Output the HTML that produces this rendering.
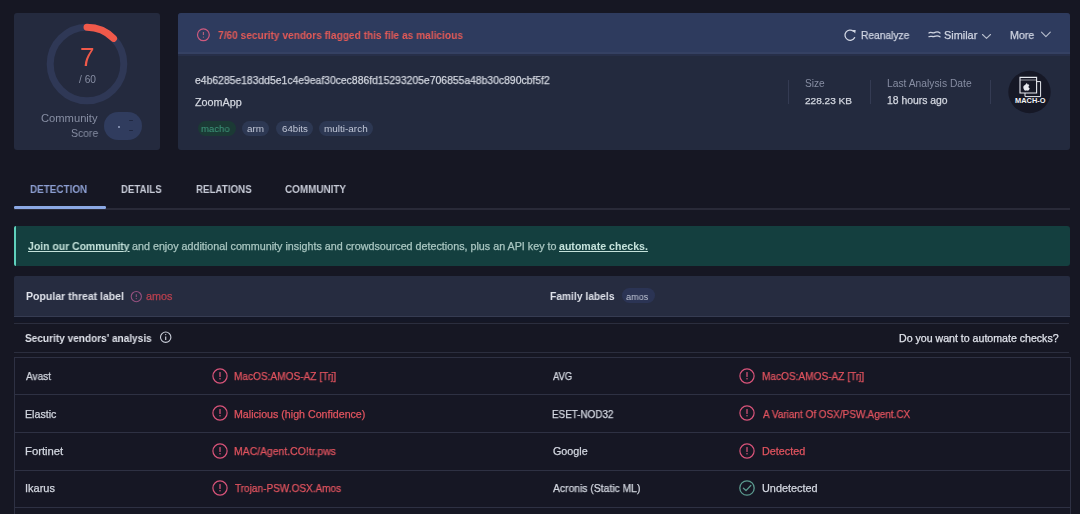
<!DOCTYPE html>
<html><head><meta charset="utf-8">
<style>
*{margin:0;padding:0;box-sizing:border-box}
html,body{width:1080px;height:514px;overflow:hidden;background:#161723;font-family:"Liberation Sans",sans-serif;color:#d3d7e0}
.a{position:absolute}
.t{position:absolute;white-space:nowrap;line-height:1;will-change:transform}
</style></head><body>
<div class="a" style="left:14px;top:13px;width:146px;height:137px;background:#242a3e;border-radius:3px"></div>
<svg class="a" style="left:0;top:0" width="180" height="160">
  <circle cx="87" cy="64" r="36.8" fill="none" stroke="#2f3856" stroke-width="7"/>
  <path d="M87 27.2 A36.8 36.8 0 0 1 113.5 38.4" fill="none" stroke="#f0594a" stroke-width="7" stroke-linecap="round"/>
</svg>
<div class="a" style="left:104px;top:112px;width:38px;height:28px;background:#303c5e;border-radius:14px"></div>
<div class="a" style="left:118.3px;top:126.4px;width:1.4px;height:1.4px;background:#8c98b8;border-radius:50%"></div>
<div class="a" style="left:128.8px;top:120px;width:4.5px;height:1.2px;background:#1f2740;border-radius:1px"></div>
<div class="a" style="left:128.8px;top:129.5px;width:4.5px;height:1.2px;background:#1f2740;border-radius:1px"></div>
<div class="a" style="left:178px;top:13px;width:892px;height:137px;background:#232a3e;border-radius:3px;overflow:hidden"></div>
<div class="a" style="left:178px;top:13px;width:892px;height:40px;background:#2e3b5e;border-radius:3px 3px 0 0"></div>
<div class="a" style="left:178px;top:52px;width:892px;height:2px;background:#354163;"></div>
<div class="a" style="left:178px;top:54px;width:892px;height:2px;background:#272f49;"></div>
<svg class="a" style="left:190px;top:22px" width="26" height="26">
  <circle cx="13.4" cy="12.8" r="5.9" fill="none" stroke="#cf5a7f" stroke-width="1.2"/>
  <path d="M13.4 9.9 V13.1" stroke="#b9607f" stroke-width="1.1"/>
  <circle cx="13.4" cy="15.1" r="0.6" fill="#b9607f"/>
</svg>
<div class="a" style="left:198px;top:120.5px;width:38px;height:15.800000000000011px;background:#1b3a35;border-radius:7.900000000000006px"></div>
<div class="a" style="left:241.5px;top:120.5px;width:27.80000000000001px;height:15.800000000000011px;background:#2d3853;border-radius:7.900000000000006px"></div>
<div class="a" style="left:275.7px;top:120.5px;width:37.10000000000002px;height:15.800000000000011px;background:#2d3853;border-radius:7.900000000000006px"></div>
<div class="a" style="left:319.3px;top:120.5px;width:53.69999999999999px;height:15.800000000000011px;background:#2d3853;border-radius:7.900000000000006px"></div>
<svg class="a" style="left:840px;top:25px" width="20" height="20">
  <path d="M13.4 6.3 A5.1 5.1 0 1 0 14.6 12.6" fill="none" stroke="#d0d5e2" stroke-width="1.25" stroke-linecap="round"/>
  <path d="M12.2 4.9 L15.7 5 L15.2 8.4 Z" fill="#d0d5e2"/>
</svg>
<svg class="a" style="left:925px;top:25px" width="20" height="20">
  <path d="M3.9 7.9 C5.8 6.6 7.6 8.4 9.4 7.6 C11.2 6.8 13.2 6.6 15 8" fill="none" stroke="#d0d5e2" stroke-width="1.25" stroke-linecap="round"/>
  <path d="M3.9 11.7 C5.8 10.4 7.6 12.2 9.4 11.4 C11.2 10.6 13.2 10.4 15 11.8" fill="none" stroke="#d0d5e2" stroke-width="1.25" stroke-linecap="round"/>
</svg>
<svg class="a" style="left:978px;top:28px" width="18" height="14">
  <path d="M4.5 6.5 L8.5 10.3 L12.5 6.5" fill="none" stroke="#b7bdcc" stroke-width="1.1" stroke-linecap="round" stroke-linejoin="round"/>
</svg>
<svg class="a" style="left:1037px;top:27px" width="18" height="14">
  <path d="M4.5 5.2 L8.9 9.6 L13.3 5.2" fill="none" stroke="#b7bdcc" stroke-width="1.1" stroke-linecap="round" stroke-linejoin="round"/>
</svg>
<div class="a" style="left:787.5px;top:80px;width:1px;height:24px;background:#343b53;"></div>
<div class="a" style="left:869.5px;top:80px;width:1px;height:24px;background:#343b53;"></div>
<div class="a" style="left:989.5px;top:80px;width:1px;height:24px;background:#343b53;"></div>
<svg class="a" style="left:1004px;top:66px" width="52" height="52">
  <circle cx="25.5" cy="26" r="21.2" fill="#161826"/>
  <path d="M21 15.6 H36.6 V30.6 H21 Z" fill="none" stroke="#e8eaf0" stroke-width="1"/>
  <path d="M16 11.4 H32.6 V27 H16 Z" fill="#161826" stroke="#e8eaf0" stroke-width="1.1"/>
  <path d="M16 14 H32.6" stroke="#e8eaf0" stroke-width="0.6"/>
  <path transform="translate(22 21.2) scale(0.82) translate(-22 -21.2)" d="M21.2 18.6 c-1.6 0 -2.5 1.3 -2.5 2.8 c0 2 1.4 4.2 2.6 4.2 c0.6 0 0.8 -0.3 1.4 -0.3 c0.6 0 0.8 0.3 1.4 0.3 c1.2 0 2.4 -2 2.4 -3 c-1 -0.5 -1.4 -1.3 -1.4 -2.1 c0 -0.9 0.5 -1.5 1.1 -1.8 c-0.5 -0.7 -1.3 -1.1 -2.1 -1.1 c-0.7 0 -1.1 0.3 -1.5 0.3 c-0.4 0 -0.8 -0.3 -1.4 -0.3 z M22.9 17.8 c0.4 -0.5 0.7 -1 0.6 -1.6 c-0.5 0 -1.1 0.3 -1.4 0.7 c-0.3 0.4 -0.6 1 -0.5 1.5 c0.5 0 1 -0.2 1.3 -0.6 z" fill="#e8eaf0"/>
  <text x="26.3" y="37" text-anchor="middle" font-family="Liberation Sans" font-weight="bold" font-size="7.2" fill="#f2f3f7" textLength="30.4" lengthAdjust="spacingAndGlyphs">MACH-O</text>
</svg>
<div class="a" style="left:14px;top:207.5px;width:1056px;height:2px;background:#292a38;"></div>
<div class="a" style="left:14px;top:206px;width:91.5px;height:2.6px;background:#8ba8e4;border-radius:1.3px"></div>
<div class="a" style="left:14px;top:225.5px;width:1056px;height:40.9px;background:#143f3f;border-radius:3px"></div>
<div class="a" style="left:14px;top:225.5px;width:2.2px;height:40.9px;background:#5fd0bc;border-radius:2px 0 0 2px"></div>
<div class="a" style="left:14px;top:276px;width:1056px;height:41px;background:#262c40;border-radius:2px"></div>
<div class="a" style="left:14px;top:316px;width:1056px;height:1.3px;background:#363c52;"></div>
<div class="a" style="left:14px;top:317.3px;width:1056px;height:5px;background:#141726;"></div>
<svg class="a" style="left:126px;top:286.5px" width="20" height="20">
  <circle cx="10.3" cy="9.6" r="5.1" fill="none" stroke="#94507e" stroke-width="1.1"/>
  <path d="M10.3 7.3 V10" stroke="#94507e" stroke-width="1.1"/>
  <circle cx="10.3" cy="11.6" r="0.6" fill="#94507e"/>
</svg>
<div class="a" style="left:621.7px;top:288.4px;width:33.0px;height:14.900000000000034px;background:#2b3454;border-radius:7.450000000000017px"></div>
<div class="a" style="left:14px;top:322.5px;width:1055px;height:1px;background:#2b2e3e;"></div>
<svg class="a" style="left:155px;top:327px" width="20" height="20">
  <circle cx="10.7" cy="10.2" r="5.2" fill="none" stroke="#c9cdd8" stroke-width="1.1"/>
  <path d="M10.7 9.4 V13" stroke="#c9cdd8" stroke-width="1.2"/>
  <circle cx="10.7" cy="7.6" r="0.65" fill="#c9cdd8"/>
</svg>
<div class="a" style="left:14px;top:352px;width:1055px;height:1px;background:#2b2e3e;"></div>
<div class="a" style="left:14px;top:357px;width:1057px;height:170px;background:#161724;border:1px solid #2e3143;box-sizing:border-box"></div>
<div class="a" style="left:14px;top:394.3px;width:1057px;height:1.2px;background:#2e3143;"></div>
<div class="a" style="left:14px;top:432px;width:1057px;height:1.2px;background:#2e3143;"></div>
<div class="a" style="left:14px;top:469.5px;width:1057px;height:1.2px;background:#2e3143;"></div>
<div class="a" style="left:14px;top:507px;width:1057px;height:1.2px;background:#2e3143;"></div>
<svg class="a" style="left:209.5px;top:365.8px" width="20" height="20">
  <circle cx="10" cy="10" r="7.1" fill="none" stroke="#d9547a" stroke-width="1.2"/>
  <path d="M10 6.6 V10.4" stroke="#d9547a" stroke-width="1.25" stroke-linecap="round"/>
  <circle cx="10" cy="12.7" r="0.75" fill="#d9547a"/>
</svg>
<svg class="a" style="left:736.5px;top:365.8px" width="20" height="20">
  <circle cx="10" cy="10" r="7.1" fill="none" stroke="#d9547a" stroke-width="1.2"/>
  <path d="M10 6.6 V10.4" stroke="#d9547a" stroke-width="1.25" stroke-linecap="round"/>
  <circle cx="10" cy="12.7" r="0.75" fill="#d9547a"/>
</svg>
<svg class="a" style="left:209.5px;top:403.2px" width="20" height="20">
  <circle cx="10" cy="10" r="7.1" fill="none" stroke="#d9547a" stroke-width="1.2"/>
  <path d="M10 6.6 V10.4" stroke="#d9547a" stroke-width="1.25" stroke-linecap="round"/>
  <circle cx="10" cy="12.7" r="0.75" fill="#d9547a"/>
</svg>
<svg class="a" style="left:736.5px;top:403.2px" width="20" height="20">
  <circle cx="10" cy="10" r="7.1" fill="none" stroke="#d9547a" stroke-width="1.2"/>
  <path d="M10 6.6 V10.4" stroke="#d9547a" stroke-width="1.25" stroke-linecap="round"/>
  <circle cx="10" cy="12.7" r="0.75" fill="#d9547a"/>
</svg>
<svg class="a" style="left:209.5px;top:440.6px" width="20" height="20">
  <circle cx="10" cy="10" r="7.1" fill="none" stroke="#d9547a" stroke-width="1.2"/>
  <path d="M10 6.6 V10.4" stroke="#d9547a" stroke-width="1.25" stroke-linecap="round"/>
  <circle cx="10" cy="12.7" r="0.75" fill="#d9547a"/>
</svg>
<svg class="a" style="left:736.5px;top:440.6px" width="20" height="20">
  <circle cx="10" cy="10" r="7.1" fill="none" stroke="#d9547a" stroke-width="1.2"/>
  <path d="M10 6.6 V10.4" stroke="#d9547a" stroke-width="1.25" stroke-linecap="round"/>
  <circle cx="10" cy="12.7" r="0.75" fill="#d9547a"/>
</svg>
<svg class="a" style="left:209.5px;top:478.0px" width="20" height="20">
  <circle cx="10" cy="10" r="7.1" fill="none" stroke="#d9547a" stroke-width="1.2"/>
  <path d="M10 6.6 V10.4" stroke="#d9547a" stroke-width="1.25" stroke-linecap="round"/>
  <circle cx="10" cy="12.7" r="0.75" fill="#d9547a"/>
</svg>
<svg class="a" style="left:736.5px;top:478.0px" width="20" height="20">
  <circle cx="10" cy="10" r="7.2" fill="none" stroke="#5b9a8f" stroke-width="1.3"/>
  <path d="M6.4 10.3 L9 12.6 L13.8 7.5" fill="none" stroke="#5b9a8f" stroke-width="1.3" stroke-linecap="round" stroke-linejoin="round"/>
</svg>
<div class="t" style="left:79.50px;top:44.20px;font-size:26px;color:#f0594a;transform:scaleX(1.0033);transform-origin:0 0;">7</div>
<div class="t" style="left:78.70px;top:74.83px;font-size:10.2px;color:#878ea3;transform:scaleX(0.9853);transform-origin:0 0;">/ 60</div>
<div class="t" style="left:41.44px;top:112.82px;font-size:10.8px;color:#878ea3;transform:scaleX(1.0357);transform-origin:0 0;">Community</div>
<div class="t" style="left:71.08px;top:127.82px;font-size:10.8px;color:#878ea3;transform:scaleX(0.9675);transform-origin:0 0;">Score</div>
<div class="t" style="left:217.79px;top:30.29px;font-size:10.6px;font-weight:bold;color:#e35a57;transform:scaleX(0.9585);transform-origin:0 0;">7/60 security vendors flagged this file as malicious</div>
<div class="t" style="left:194.79px;top:75.48px;font-size:10.5px;-webkit-text-stroke:0.25px #d3d7e0;color:#d3d7e0;transform:scaleX(0.9877);transform-origin:0 0;">e4b6285e183dd5e1c4e9eaf30cec886fd15293205e706855a48b30c890cbf5f2</div>
<div class="t" style="left:195.18px;top:97.32px;font-size:10.8px;-webkit-text-stroke:0.25px #d3d7e0;color:#d3d7e0;">ZoomApp</div>
<div class="t" style="left:201.13px;top:123.95px;font-size:9.7px;color:#3f9c7e;transform:scaleX(0.9829);transform-origin:0 0;">macho</div>
<div class="t" style="left:247.20px;top:123.95px;font-size:9.7px;color:#c0c6d6;transform:scaleX(1.0251);transform-origin:0 0;">arm</div>
<div class="t" style="left:281.72px;top:123.95px;font-size:9.7px;color:#c0c6d6;transform:scaleX(0.9957);transform-origin:0 0;">64bits</div>
<div class="t" style="left:324.20px;top:123.95px;font-size:9.7px;color:#c0c6d6;transform:scaleX(1.0277);transform-origin:0 0;">multi-arch</div>
<div class="t" style="left:860.98px;top:29.92px;font-size:10.8px;-webkit-text-stroke:0.25px #d0d5e2;color:#d0d5e2;transform:scaleX(0.9482);transform-origin:0 0;">Reanalyze</div>
<div class="t" style="left:944.06px;top:29.92px;font-size:10.8px;-webkit-text-stroke:0.25px #d0d5e2;color:#d0d5e2;transform:scaleX(1.0084);transform-origin:0 0;">Similar</div>
<div class="t" style="left:1010.15px;top:29.92px;font-size:10.8px;-webkit-text-stroke:0.25px #d0d5e2;color:#d0d5e2;transform:scaleX(0.9850);transform-origin:0 0;">More</div>
<div class="t" style="left:805.10px;top:79.00px;font-size:10px;color:#878ea3;transform:scaleX(1.0111);transform-origin:0 0;">Size</div>
<div class="t" style="left:804.99px;top:95.88px;font-size:9.9px;-webkit-text-stroke:0.25px #d3d7e0;color:#d3d7e0;transform:scaleX(1.0204);transform-origin:0 0;">228.23 KB</div>
<div class="t" style="left:886.78px;top:79.00px;font-size:10px;color:#878ea3;transform:scaleX(1.0287);transform-origin:0 0;">Last Analysis Date</div>
<div class="t" style="left:886.87px;top:95.80px;font-size:10px;-webkit-text-stroke:0.25px #d3d7e0;color:#d3d7e0;transform:scaleX(1.0381);transform-origin:0 0;">18 hours ago</div>
<div class="t" style="left:30.41px;top:183.62px;font-size:10.8px;font-weight:bold;color:#8d9fd2;transform:scaleX(0.9168);transform-origin:0 0;">DETECTION</div>
<div class="t" style="left:121.12px;top:183.62px;font-size:10.8px;font-weight:bold;color:#c6cad6;transform:scaleX(0.8951);transform-origin:0 0;">DETAILS</div>
<div class="t" style="left:195.71px;top:183.62px;font-size:10.8px;font-weight:bold;color:#c6cad6;transform:scaleX(0.9034);transform-origin:0 0;">RELATIONS</div>
<div class="t" style="left:285.00px;top:183.62px;font-size:10.8px;font-weight:bold;color:#c6cad6;transform:scaleX(0.9170);transform-origin:0 0;">COMMUNITY</div>
<div class="t" style="left:26.07px;top:291.19px;font-size:10.6px;font-weight:bold;color:#dfe2ea;transform:scaleX(0.9908);transform-origin:0 0;">Popular threat label</div>
<div class="t" style="left:145.87px;top:291.39px;font-size:10.6px;-webkit-text-stroke:0.25px #b9404f;color:#b9404f;transform:scaleX(1.0207);transform-origin:0 0;">amos</div>
<div class="t" style="left:550.38px;top:291.19px;font-size:10.6px;font-weight:bold;color:#dfe2ea;transform:scaleX(0.9686);transform-origin:0 0;">Family labels</div>
<div class="t" style="left:626.24px;top:292.23px;font-size:9.5px;color:#c0c6d6;transform:scaleX(0.9572);transform-origin:0 0;">amos</div>
<div class="t" style="left:25.40px;top:333.19px;font-size:10.6px;font-weight:bold;color:#dfe2ea;transform:scaleX(0.9509);transform-origin:0 0;">Security vendors&#x27; analysis</div>
<div class="t" style="left:898.85px;top:333.49px;font-size:10.6px;-webkit-text-stroke:0.25px #dfe2ea;color:#dfe2ea;">Do you want to automate checks?</div>
<div class="t" style="left:26.20px;top:371.49px;font-size:10.6px;-webkit-text-stroke:0.25px #d3d7e0;color:#d3d7e0;transform:scaleX(0.9529);transform-origin:0 0;">Avast</div>
<div class="t" style="left:234.19px;top:371.49px;font-size:10.6px;-webkit-text-stroke:0.25px #e2545f;color:#e2545f;transform:scaleX(0.9527);transform-origin:0 0;">MacOS:AMOS-AZ [Trj]</div>
<div class="t" style="left:553.20px;top:371.49px;font-size:10.6px;-webkit-text-stroke:0.25px #d3d7e0;color:#d3d7e0;transform:scaleX(0.8908);transform-origin:0 0;">AVG</div>
<div class="t" style="left:761.89px;top:371.49px;font-size:10.6px;-webkit-text-stroke:0.25px #e2545f;color:#e2545f;transform:scaleX(0.9527);transform-origin:0 0;">MacOS:AMOS-AZ [Trj]</div>
<div class="t" style="left:25.35px;top:408.79px;font-size:10.6px;-webkit-text-stroke:0.25px #d3d7e0;color:#d3d7e0;transform:scaleX(1.0079);transform-origin:0 0;">Elastic</div>
<div class="t" style="left:234.15px;top:408.79px;font-size:10.6px;-webkit-text-stroke:0.25px #e2545f;color:#e2545f;transform:scaleX(1.0047);transform-origin:0 0;">Malicious (high Confidence)</div>
<div class="t" style="left:552.41px;top:408.79px;font-size:10.6px;-webkit-text-stroke:0.25px #d3d7e0;color:#d3d7e0;transform:scaleX(0.9313);transform-origin:0 0;">ESET-NOD32</div>
<div class="t" style="left:762.70px;top:408.79px;font-size:10.6px;-webkit-text-stroke:0.25px #e2545f;color:#e2545f;transform:scaleX(0.9412);transform-origin:0 0;">A Variant Of OSX/PSW.Agent.CX</div>
<div class="t" style="left:25.30px;top:446.09px;font-size:10.6px;-webkit-text-stroke:0.25px #d3d7e0;color:#d3d7e0;transform:scaleX(1.0652);transform-origin:0 0;">Fortinet</div>
<div class="t" style="left:234.17px;top:446.09px;font-size:10.6px;-webkit-text-stroke:0.25px #e2545f;color:#e2545f;transform:scaleX(0.9833);transform-origin:0 0;">MAC/Agent.CO!tr.pws</div>
<div class="t" style="left:552.66px;top:446.09px;font-size:10.6px;-webkit-text-stroke:0.25px #d3d7e0;color:#d3d7e0;transform:scaleX(1.0160);transform-origin:0 0;">Google</div>
<div class="t" style="left:761.84px;top:446.09px;font-size:10.6px;-webkit-text-stroke:0.25px #e2545f;color:#e2545f;transform:scaleX(1.0199);transform-origin:0 0;">Detected</div>
<div class="t" style="left:25.21px;top:483.39px;font-size:10.6px;-webkit-text-stroke:0.25px #d3d7e0;color:#d3d7e0;transform:scaleX(1.0365);transform-origin:0 0;">Ikarus</div>
<div class="t" style="left:234.80px;top:483.39px;font-size:10.6px;-webkit-text-stroke:0.25px #e2545f;color:#e2545f;transform:scaleX(0.9473);transform-origin:0 0;">Trojan-PSW.OSX.Amos</div>
<div class="t" style="left:553.20px;top:483.39px;font-size:10.6px;-webkit-text-stroke:0.25px #d3d7e0;color:#d3d7e0;transform:scaleX(0.9767);transform-origin:0 0;">Acronis (Static ML)</div>
<div class="t" style="left:761.94px;top:483.39px;font-size:10.6px;-webkit-text-stroke:0.25px #d3d7e0;color:#d3d7e0;transform:scaleX(1.0269);transform-origin:0 0;">Undetected</div>
<div class="t" style="left:28.20px;top:241.39px;font-size:10.6px;font-weight:bold;color:#c4e2db;transform:scaleX(0.9855);transform-origin:0 0;text-decoration:underline;text-underline-offset:1px">Join our Community</div>
<div class="t" style="left:131.97px;top:241.39px;font-size:10.6px;-webkit-text-stroke:0.25px #a9c6c1;color:#a9c6c1;transform:scaleX(1.0138);transform-origin:0 0;">and enjoy additional community insights and crowdsourced detections, plus an API key to</div>
<div class="t" style="left:559.29px;top:241.39px;font-size:10.6px;font-weight:bold;color:#c4e2db;text-decoration:underline;text-underline-offset:1px">automate checks.</div>

</body></html>
